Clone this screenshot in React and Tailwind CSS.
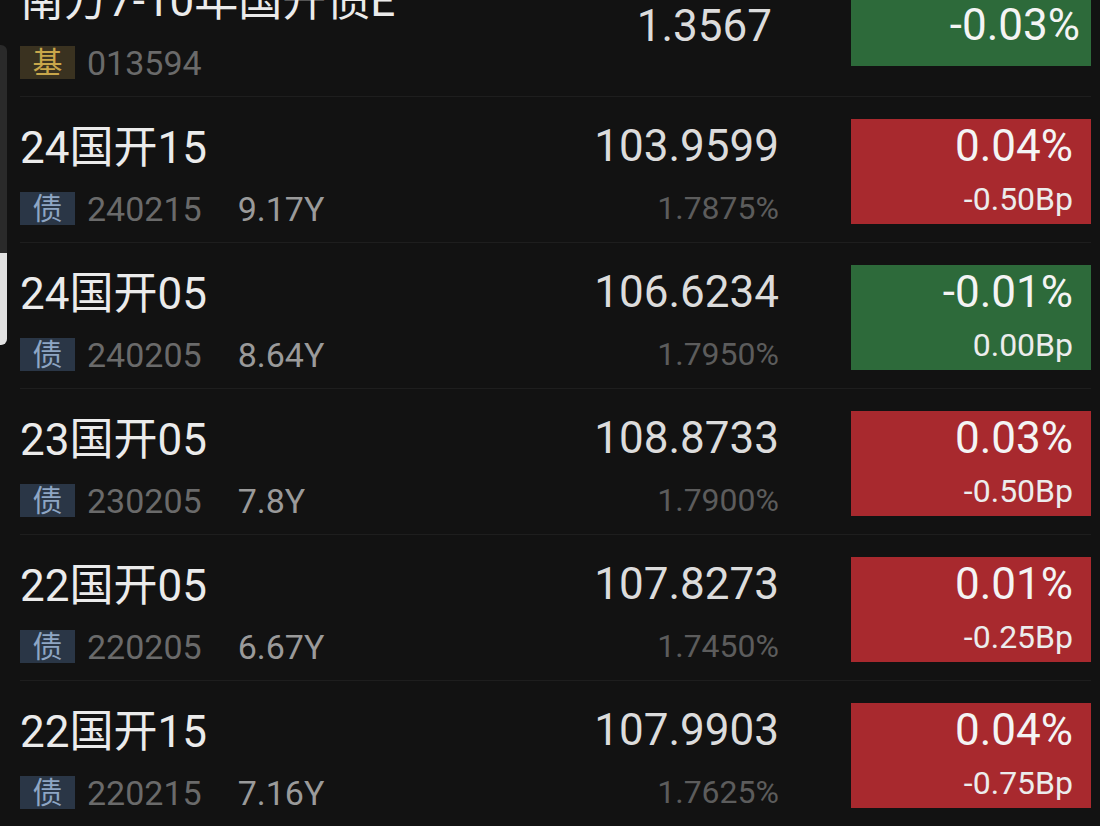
import React from 'react'

const bonds = [
  { name: '24国开15', code: '240215', term: '9.17Y', price: '103.9599', yld: '1.7875%', chg: '0.04%', bp: '-0.50Bp', up: true },
  { name: '24国开05', code: '240205', term: '8.64Y', price: '106.6234', yld: '1.7950%', chg: '-0.01%', bp: '0.00Bp', up: false },
  { name: '23国开05', code: '230205', term: '7.8Y', price: '108.8733', yld: '1.7900%', chg: '0.03%', bp: '-0.50Bp', up: true },
  { name: '22国开05', code: '220205', term: '6.67Y', price: '107.8273', yld: '1.7450%', chg: '0.01%', bp: '-0.25Bp', up: true },
  { name: '22国开15', code: '220215', term: '7.16Y', price: '107.9903', yld: '1.7625%', chg: '0.04%', bp: '-0.75Bp', up: true },
]

const font = { fontFamily: 'Roboto, "Noto Sans CJK SC", sans-serif' }

const BondRow = ({ b }) => (
  <div className="ml-5 mr-[9px] h-[146px] flex border-b border-[#1e1e1e]">
    {/* Name + code */}
    <div className="flex-1 flex flex-col">
      <div className="mt-[29px] text-[44px] leading-[44px] text-[#ebebeb]">{b.name}</div>
      <div className="mt-[22px] h-[33px] flex items-center">
        <span className="w-[55px] h-[33px] flex items-center justify-center bg-[#2a3646] text-[#8ea6c4] text-[30px] leading-none">债</span>
        <span className="ml-[12px] text-[34px] leading-none text-[#6a6a6a]">{b.code}</span>
        <span className="ml-[36px] text-[34px] leading-none text-[#9a9a9a]">{b.term}</span>
      </div>
    </div>

    {/* Price + yield */}
    <div className="mr-[72px] flex flex-col items-end">
      <div className="mt-[27px] text-[44px] leading-[44px] text-[#dcdcdc]">{b.price}</div>
      <div className="mt-[24px] text-[32px] leading-[32px] text-[#5c5c5c]">{b.yld}</div>
    </div>

    {/* Change box */}
    <div className={`mt-[22px] w-[240px] h-[105px] flex flex-col items-end pr-[18px] ${b.up ? 'bg-[#a8292e]' : 'bg-[#2d6a3a]'}`}>
      <div className="mt-[5px] text-[44px] leading-[44px] text-[#f4f4f4]">{b.chg}</div>
      <div className="mt-[15px] text-[32px] leading-[32px] text-[#ececec]">{b.bp}</div>
    </div>
  </div>
)

export default function App() {
  return (
    <div className="relative w-[1100px] h-[826px] overflow-hidden bg-[#121212]" style={font}>
      <div className="-mt-[49px]">
        {/* Fund row (cut off at top) */}
        <div className="ml-5 mr-[9px] h-[146px] flex border-b border-[#1e1e1e]">
          <div className="flex-1 flex flex-col">
            <div className="mt-[28px] text-[44px] leading-[44px] text-[#ebebeb]">南方7-10年国开债E</div>
            <div className="mt-[23px] h-[33px] flex items-center">
              <span className="w-[55px] h-[33px] flex items-center justify-center bg-[#3a3220] text-[#c8a64a] text-[30px] leading-none">基</span>
              <span className="ml-[12px] text-[34px] leading-none text-[#6a6a6a]">013594</span>
            </div>
          </div>
          <div className="mr-[79px] flex flex-col items-end">
            <div className="mt-[53px] text-[44px] leading-[44px] text-[#dcdcdc]">1.3567</div>
          </div>
          <div className="mt-[21px] w-[240px] h-[94px] flex flex-col items-end pr-[11px] bg-[#2d6a3a]">
            <div className="mt-[31px] text-[44px] leading-[44px] text-[#f4f4f4]">-0.03%</div>
          </div>
        </div>

        {bonds.map((b) => (
          <BondRow key={b.code} b={b} />
        ))}
      </div>

      {/* Scroll indicator overlay */}
      <div className="absolute left-0 top-[45px] w-[7px] h-[300px] flex flex-col rounded-r-[6px] overflow-hidden">
        <div className="flex-1 bg-[#2a2a2a]" />
        <div className="h-[92px] bg-[#e2e2e2]" />
      </div>
    </div>
  )
}
